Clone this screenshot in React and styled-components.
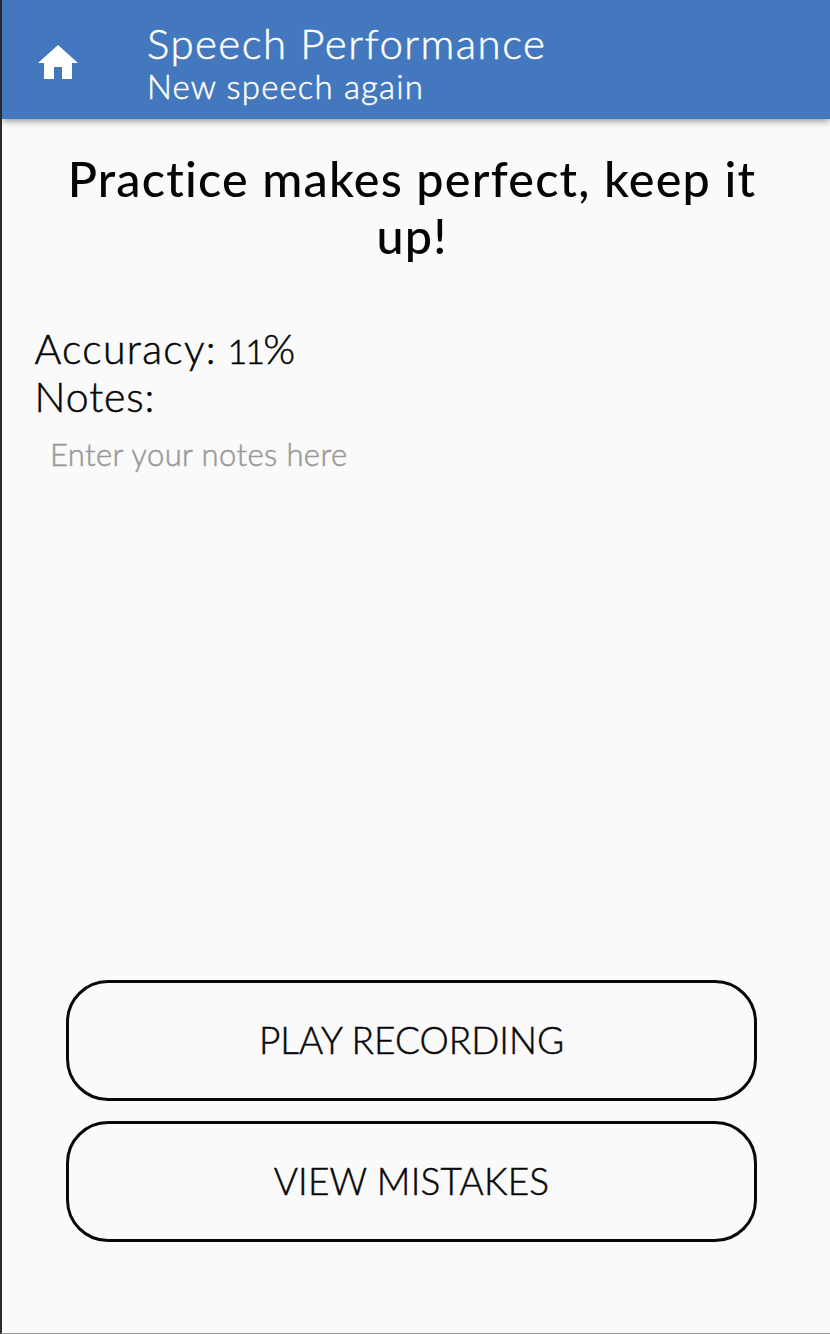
import React from "react";
import styled, { createGlobalStyle } from "styled-components";

const Global = createGlobalStyle`
  * { box-sizing: border-box; }
  body { margin: 0; background: #fafafa; }
`;
const Screen = styled.div`
  width: 830px; height: 1334px; display: flex; flex-direction: column;
  background: #fafafa; border-left: 2px solid #2b2b2d; border-bottom: 1px solid #999;
  color: #050505; font-family: Lato, "Open Sans", sans-serif; overflow: hidden;
  font-variant-ligatures: none;
`;
const Bar = styled.header`
  height: 119px; flex: none; display: flex; background: #4478be; color: #fff;
  box-shadow: 0 2px 7px rgba(0,0,0,.42);
`;
const HomeButton = styled.button`
  border: 0; padding: 39px 0 0 32.4px; margin: 0; background: none; width: 145px; color: #fff;
  display: flex; align-items: flex-start;
  svg { width: 48px; height: 48px; display: block; }
`;
const Titles = styled.div`padding-top: 18px;`;
const Line = styled.div`
  font-size: ${p => p.$size}px; line-height: ${p => p.$lh}px; font-weight: 300;
  letter-spacing: ${p => p.$ls || 0}px; white-space: nowrap;
  -webkit-text-stroke: 0.5px currentColor;
`;
const Digits = styled.span`font-size: 34px; line-height: 1; letter-spacing: -1.8px; margin-left: -2px;`;
const Heading = styled.h1`
  margin: 31px 0 0; padding-right: 8px; font-size: 48.5px; line-height: 57px;
  font-weight: 500; text-align: center; letter-spacing: 1.2px;
`;
const Details = styled.section`padding: 61px 0 0 32.5px; height: 716px; flex: none;`;
const Notes = styled.div`padding: 14px 0 0 15.5px; color: #999;`;
const Actions = styled.div`display: flex; flex-direction: column; gap: 20px; margin: 0 73px 0 64px;`;
const Action = styled.button`
  height: 121px; border: 3px solid #080808; border-radius: 42px; background: transparent;
  color: #080808; font-family: inherit; padding: 0 0 2px; display: flex; align-items: center; justify-content: center;
`;

export default function App() {
  return <><Global /><Screen>
    <Bar>
      <HomeButton aria-label="Home"><svg viewBox="0 0 24 24" fill="currentColor"><path d="M10 20v-6h4v6h5v-8h3L12 3 2 12h3v8z" /></svg></HomeButton>
      <Titles><Line $size={42} $lh={50} $ls={1.45}>Speech Performance</Line><Line $size={33} $lh={36} $ls={1.15}>New speech again</Line></Titles>
    </Bar>
    <Heading>Practice makes perfect, keep it<br />up!</Heading>
    <Details>
      <Line $size={41} $lh={48} $ls={1.3}>Accuracy: <Digits>11</Digits>%</Line>
      <Line $size={41} $lh={48} $ls={0.9}>Notes:</Line>
      <Notes><Line $size={31} $lh={38} $ls={0.4}>Enter your notes here</Line></Notes>
    </Details>
    <Actions>
      <Action><Line $size={37} $lh={44}>PLAY RECORDING</Line></Action>
      <Action><Line $size={37} $lh={44} $ls={0.2}>VIEW MISTAKES</Line></Action>
    </Actions>
  </Screen></>;
}
